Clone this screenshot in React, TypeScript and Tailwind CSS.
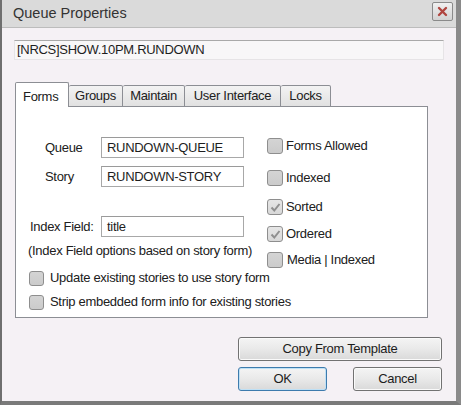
const TABS = [
  { label: 'Forms', w: 'w-[54px]', active: true },
  { label: 'Groups', w: 'w-[54px]' },
  { label: 'Maintain', w: 'w-[62px]' },
  { label: 'User Interface', w: 'w-[96px]' },
  { label: 'Locks', w: 'w-[50px]' },
];

function Box({ checked = false, size = 'w-[15px] h-[15px]' }: { checked?: boolean; size?: string }) {
  return (
    <span
      className={`${size} shrink-0 rounded-[3px] border border-[#8e8e8e] flex items-center justify-center
        ${checked ? 'bg-gradient-to-b from-[#e6e6e6] to-[#d8d8d8]' : 'bg-gradient-to-b from-[#d4d4d4] to-[#cbcbcb]'}`}
    >
      {checked && (
        <svg width="11" height="11" viewBox="0 0 11 11">
          <path d="M1.5 5.5 L4.3 8.5 L9.5 2" fill="none" stroke="#8f8f8f" strokeWidth="2" />
        </svg>
      )}
    </span>
  );
}

function Field({ value, w }: { value: string; w: string }) {
  return (
    <div className={`${w} h-[21px] bg-white border border-[#a8a8a8] border-t-[#9a9a9a] flex items-center pl-[5px] text-[#1e1e1e]`}>
      {value}
    </div>
  );
}

function Button({ children, primary = false, w }: { children: React.ReactNode; primary?: boolean; w: string }) {
  return (
    <div
      className={`${w} h-[24px] rounded-[3px] border flex items-center justify-center text-[#1c1c1c]
        bg-gradient-to-b from-[#f4f4f4] via-[#e9e9e9] to-[#d9d9d9]
        ${primary ? 'border-[#3d7bad] shadow-[inset_0_0_0_1px_#bfe0f5]' : 'border-[#727272] shadow-[inset_0_0_0_1px_#fafafa]'}`}
    >
      {children}
    </div>
  );
}

export default function App() {
  return (
    <div className="w-[461px] h-[405px] flex flex-col bg-[#f5f1f5] border-l-2 border-l-[#6f6f6f] border-r-[5px] border-r-[#8a8a8a] border-b-4 border-b-[#7a7a7a] font-['Liberation_Sans',Arial,sans-serif] text-[13px] tracking-[-0.3px] text-[#202020] overflow-hidden">
      <div className="h-[28px] shrink-0 bg-[#dadada] border-b border-[#bcbcbc] flex items-center justify-between pl-[11px] pr-[3px]">
        <span className="text-[14.5px] tracking-[0px] text-[#333]">Queue Properties</span>
        <div className="w-[21px] h-[19px] rounded-[2px] border border-[#8a8a8a] bg-gradient-to-b from-[#f0f0f0] to-[#d2d2d2] flex items-center justify-center mb-[4px]">
          <svg width="11" height="11" viewBox="0 0 11 11">
            <path d="M2 2 L9 9 M9 2 L2 9" stroke="#b0453f" strokeWidth="2.4" strokeLinecap="round" />
          </svg>
        </div>
      </div>

      <div className="mt-[12px] mx-[12px] h-[20px] bg-[#f8f7f8] border border-[#e6e4e6] border-t-[#a9a9a9] flex items-center pl-[2px] text-[#1e1e1e]">
        [NRCS]SHOW.10PM.RUNDOWN
      </div>

      <div className="mt-[22px] ml-[13px] flex items-end h-[25px] relative z-10">
        {TABS.map((t) =>
          t.active ? (
            <div
              key={t.label}
              className={`${t.w} h-[25px] bg-white border border-b-0 border-[#8c8e94] rounded-t-[2px] pl-[7px] pt-[4px]`}
            >
              {t.label}
            </div>
          ) : (
            <div
              key={t.label}
              className={`${t.w} h-[22px] bg-gradient-to-b from-[#f3f3f3] to-[#e1e1e1] border border-l-0 border-[#8c8e94] rounded-t-[2px] flex items-center justify-center`}
            >
              {t.label}
            </div>
          ),
        )}
      </div>

      <div className="ml-[13px] w-[413px] h-[212px] -mt-[1px] bg-white border border-[#8c8e94] px-px">
        <div className="flex">
          <div className="w-[250px] pt-[30px]">
            <div className="flex items-center">
              <span className="w-[84px] pl-[28px]">Queue</span>
              <Field value="RUNDOWN-QUEUE" w="w-[143px]" />
            </div>
            <div className="flex items-center mt-[8px]">
              <span className="w-[84px] pl-[28px]">Story</span>
              <Field value="RUNDOWN-STORY" w="w-[143px]" />
            </div>
            <div className="flex items-center mt-[29px]">
              <span className="w-[84px] pl-[13px]">Index Field:</span>
              <Field value="title" w="w-[143px]" />
            </div>
            <div className="mt-[7px] pl-[11px] leading-[14px] whitespace-nowrap">
              (Index Field options based on story form)
            </div>
          </div>
          <div className="pt-[31px] flex flex-col">
            <div className="flex items-center gap-[3px] h-[16px]">
              <Box size="w-[16px] h-[16px]" />
              <span>Forms Allowed</span>
            </div>
            <div className="flex items-center gap-[3px] h-[16px] mt-[16px]">
              <Box size="w-[16px] h-[16px]" />
              <span>Indexed</span>
            </div>
            <div className="flex items-center gap-[3px] h-[16px] mt-[13px]">
              <Box checked size="w-[16px] h-[16px]" />
              <span>Sorted</span>
            </div>
            <div className="flex items-center gap-[3px] h-[16px] mt-[11px]">
              <Box checked size="w-[16px] h-[16px]" />
              <span>Ordered</span>
            </div>
            <div className="flex items-center gap-[4px] h-[16px] mt-[10px]">
              <Box size="w-[16px] h-[16px]" />
              <span>Media | Indexed</span>
            </div>
          </div>
        </div>
        <div className="flex items-center gap-[6px] h-[16px] mt-[2px] pl-[12px]">
          <Box />
          <span>Update existing stories to use story form</span>
        </div>
        <div className="flex items-center gap-[6px] h-[16px] mt-[8px] pl-[12px]">
          <Box />
          <span>Strip embedded form info for existing stories</span>
        </div>
      </div>

      <div className="mt-[19px] mr-[14px] self-end flex flex-col gap-[6px]">
        <Button w="w-[204px]">Copy From Template</Button>
        <div className="flex justify-between">
          <Button primary w="w-[89px]">OK</Button>
          <Button w="w-[89px]">Cancel</Button>
        </div>
      </div>
    </div>
  );
}
